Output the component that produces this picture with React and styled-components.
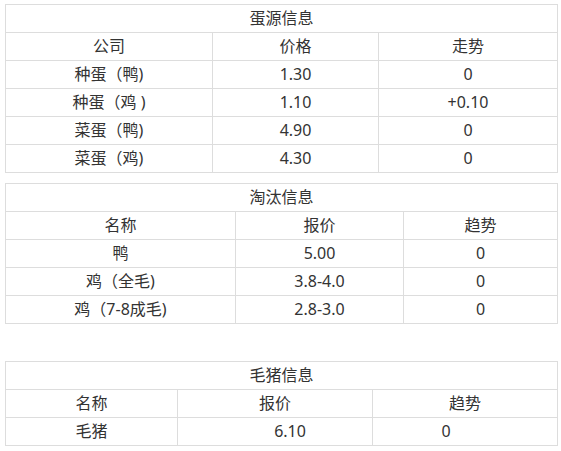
import styled, { createGlobalStyle } from "styled-components";

const GlobalStyle = createGlobalStyle`
  body {
    margin: 0;
    background: #fff;
    font-family: "Noto Sans", "Noto Sans CJK SC", sans-serif;
    color: #333;
  }
`;

const Page = styled.div`
  padding: 4px 4px 0 5px;
  display: flex;
  flex-direction: column;
`;

const Table = styled.table`
  width: 552px;
  border-collapse: collapse;
  table-layout: fixed;
  margin-top: ${(p) => p.$gap || 0}px;
  td {
    border: 1px solid #dddddd;
    height: 27px;
    padding: 0;
    font-size: 16px;
    line-height: 27px;
    text-align: center;
    vertical-align: middle;
    white-space: nowrap;
  }
`;

const Cell = styled.td`
  && {
    padding-left: ${(p) => (p.$shift > 0 ? p.$shift * 2 : 0)}px;
    padding-right: ${(p) => (p.$shift < 0 ? -p.$shift * 2 : 0)}px;
  }
`;

const tables = [
  {
    title: "蛋源信息",
    cols: [207, 166, 179],
    head: ["公司", "价格", "走势"],
    rows: [
      ["种蛋（鸭)", "1.30", "0"],
      ["种蛋（鸡 )", "1.10", "+0.10"],
      ["菜蛋（鸭)", "4.90", "0"],
      ["菜蛋（鸡)", "4.30", "0"],
    ],
  },
  {
    title: "淘汰信息",
    gap: 10,
    cols: [230, 168, 154],
    head: ["名称", "报价", "趋势"],
    rows: [
      ["鸭", "5.00", "0"],
      ["鸡（全毛)", "3.8-4.0", "0"],
      ["鸡（7-8成毛)", "2.8-3.0", "0"],
    ],
  },
  {
    title: "毛猪信息",
    gap: 37,
    cols: [172, 195, 185],
    head: ["名称", "报价", "趋势"],
    rows: [["毛猪", "6.10", "0"]],
    shifts: [0, 15, -19],
  },
];

const InfoTable = ({ title, gap, cols, head, rows, shifts = [0, 0, 0] }) => (
  <Table $gap={gap}>
    <colgroup>
      {cols.map((w, i) => (
        <col key={i} style={{ width: w }} />
      ))}
    </colgroup>
    <tbody>
      <tr>
        <td colSpan={3}>{title}</td>
      </tr>
      <tr>
        {head.map((h) => (
          <td key={h}>{h}</td>
        ))}
      </tr>
      {rows.map((r, i) => (
        <tr key={i}>
          {r.map((c, j) => (
            <Cell key={j} $shift={shifts[j]}>
              {c}
            </Cell>
          ))}
        </tr>
      ))}
    </tbody>
  </Table>
);

export default function App() {
  return (
    <>
      <GlobalStyle />
      <Page>
        {tables.map((t) => (
          <InfoTable key={t.title} {...t} />
        ))}
      </Page>
    </>
  );
}
